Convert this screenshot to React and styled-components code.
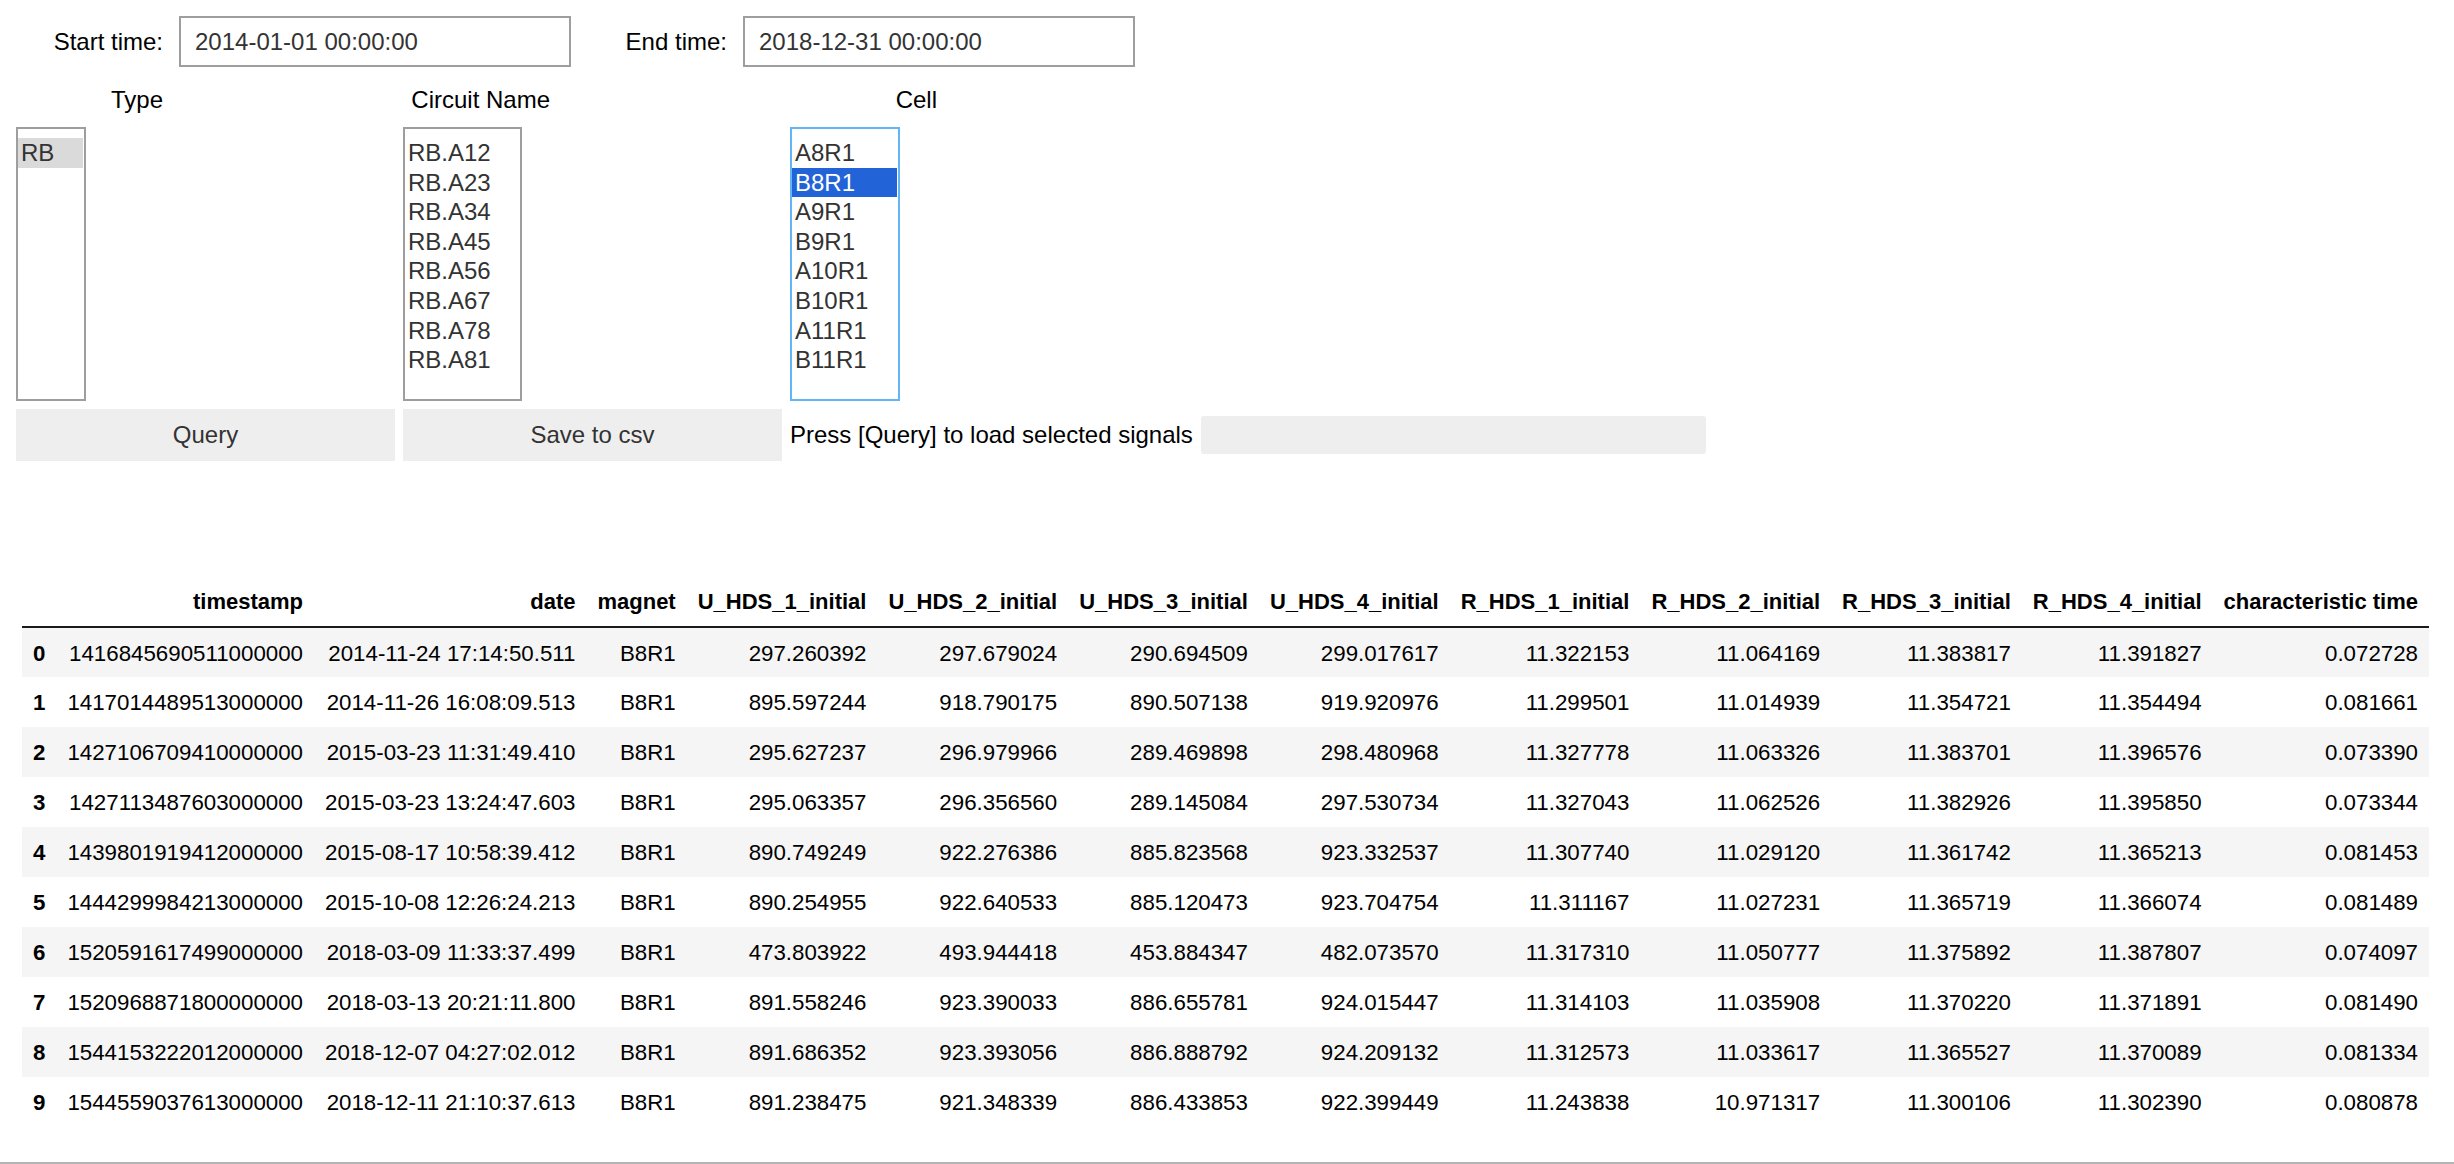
import React from 'react';
import styled, { createGlobalStyle } from 'styled-components';

const GlobalStyle = createGlobalStyle`
  html, body {
    margin: 0;
    padding: 0;
    background: #fff;
  }
  body {
    font-family: "Liberation Sans", Arial, Helvetica, sans-serif;
    color: #000;
  }
`;

const Page = styled.div`
  width: 2454px;
  height: 1164px;
  box-sizing: border-box;
  border-bottom: 2px solid #b4b4b4;
  padding-top: 16px;
  overflow: hidden;
`;

const Widgets = styled.div`
  padding-left: 16px;
  font-size: 24px;
`;

const TimeRow = styled.div`
  display: flex;
  gap: 9px;
`;

const TextWidget = styled.div`
  display: flex;
  align-items: center;
  gap: 16px;
`;

const Description = styled.div`
  width: 147px;
  text-align: right;
  white-space: nowrap;
  color: #000;
`;

const TextInput = styled.div`
  box-sizing: border-box;
  width: 392px;
  height: 51px;
  border: 2px solid #9e9e9e;
  padding-left: 14px;
  display: flex;
  align-items: center;
  color: #333;
`;

const Columns = styled.div`
  display: flex;
  gap: 8px;
  margin-top: 16px;
`;

const Column = styled.div`
  width: 379px;
  display: flex;
  flex-direction: column;
`;

const ColumnTitle = styled.div`
  width: 147px;
  height: 34px;
  line-height: 34px;
  text-align: right;
  white-space: nowrap;
  margin-bottom: 10px;
`;

const ListBox = styled.div`
  box-sizing: border-box;
  width: ${p => p.$width}px;
  height: 274px;
  border: 2px solid ${p => (p.$focused ? '#64b5f6' : '#9e9e9e')};
  padding: 9px 1px 0 0;
  color: #333;
`;

const Option = styled.div`
  height: 29.6px;
  line-height: 29.6px;
  padding-left: 3px;
  white-space: nowrap;
  background: ${p => (p.$selected ? (p.$active ? '#2264d8' : '#dadada') : 'transparent')};
  color: ${p => (p.$selected && p.$active ? '#fff' : '#333')};
`;

const ActionRow = styled.div`
  display: flex;
  align-items: center;
  gap: 8px;
  margin-top: 8px;
`;

const Button = styled.div`
  width: ${p => p.$width}px;
  height: 52px;
  background: #eeeeee;
  color: #333;
  display: flex;
  align-items: center;
  justify-content: center;
`;

const Status = styled.div`
  display: flex;
  align-items: center;
  white-space: nowrap;
`;

const StatusBar = styled.div`
  width: 505px;
  height: 38px;
  margin-left: 8px;
  border-radius: 3px;
  background: #eeeeee;
`;

const Table = styled.table`
  margin: 117px 0 0 22px;
  border-collapse: collapse;
  border-spacing: 0;
  font-size: 22.3px;
  color: #000;
`;

const HeadCell = styled.th`
  height: 48px;
  padding: 0 11px;
  font-size: 22px;
  text-align: right;
  vertical-align: middle;
  font-weight: bold;
  white-space: nowrap;
  border-bottom: 2px solid #1a1a1a;
`;

const Row = styled.tr`
  height: 50px;
  background: ${p => (p.$striped ? '#f5f5f5' : 'transparent')};
`;

const Cell = styled.td`
  padding: 2px 11px 0;
  text-align: right;
  vertical-align: middle;
  white-space: nowrap;
  font-weight: ${p => (p.$index ? 'bold' : 'normal')};
`;

const columns = [
  'timestamp', 'date', 'magnet', 'U_HDS_1_initial', 'U_HDS_2_initial', 'U_HDS_3_initial',
  'U_HDS_4_initial', 'R_HDS_1_initial', 'R_HDS_2_initial', 'R_HDS_3_initial', 'R_HDS_4_initial',
  'characteristic time',
];

const rows = [
  ['1416845690511000000', '2014-11-24 17:14:50.511', 'B8R1', '297.260392', '297.679024', '290.694509', '299.017617', '11.322153', '11.064169', '11.383817', '11.391827', '0.072728'],
  ['1417014489513000000', '2014-11-26 16:08:09.513', 'B8R1', '895.597244', '918.790175', '890.507138', '919.920976', '11.299501', '11.014939', '11.354721', '11.354494', '0.081661'],
  ['1427106709410000000', '2015-03-23 11:31:49.410', 'B8R1', '295.627237', '296.979966', '289.469898', '298.480968', '11.327778', '11.063326', '11.383701', '11.396576', '0.073390'],
  ['1427113487603000000', '2015-03-23 13:24:47.603', 'B8R1', '295.063357', '296.356560', '289.145084', '297.530734', '11.327043', '11.062526', '11.382926', '11.395850', '0.073344'],
  ['1439801919412000000', '2015-08-17 10:58:39.412', 'B8R1', '890.749249', '922.276386', '885.823568', '923.332537', '11.307740', '11.029120', '11.361742', '11.365213', '0.081453'],
  ['1444299984213000000', '2015-10-08 12:26:24.213', 'B8R1', '890.254955', '922.640533', '885.120473', '923.704754', '11.311167', '11.027231', '11.365719', '11.366074', '0.081489'],
  ['1520591617499000000', '2018-03-09 11:33:37.499', 'B8R1', '473.803922', '493.944418', '453.884347', '482.073570', '11.317310', '11.050777', '11.375892', '11.387807', '0.074097'],
  ['1520968871800000000', '2018-03-13 20:21:11.800', 'B8R1', '891.558246', '923.390033', '886.655781', '924.015447', '11.314103', '11.035908', '11.370220', '11.371891', '0.081490'],
  ['1544153222012000000', '2018-12-07 04:27:02.012', 'B8R1', '891.686352', '923.393056', '886.888792', '924.209132', '11.312573', '11.033617', '11.365527', '11.370089', '0.081334'],
  ['1544559037613000000', '2018-12-11 21:10:37.613', 'B8R1', '891.238475', '921.348339', '886.433853', '922.399449', '11.243838', '10.971317', '11.300106', '11.302390', '0.080878'],
];

const circuits = ['RB.A12', 'RB.A23', 'RB.A34', 'RB.A45', 'RB.A56', 'RB.A67', 'RB.A78', 'RB.A81'];
const cells = ['A8R1', 'B8R1', 'A9R1', 'B9R1', 'A10R1', 'B10R1', 'A11R1', 'B11R1'];

const SelectList = ({ title, items, selected, width, focused }) => (
  <Column>
    <ColumnTitle>{title}</ColumnTitle>
    <ListBox $width={width} $focused={focused}>
      {items.map(item => (
        <Option key={item} $selected={item === selected} $active={focused}>
          {item}
        </Option>
      ))}
    </ListBox>
  </Column>
);

export default function App() {
  return (
    <Page>
      <GlobalStyle />
      <Widgets>
        <TimeRow>
          <TextWidget>
            <Description>Start time:</Description>
            <TextInput>2014-01-01 00:00:00</TextInput>
          </TextWidget>
          <TextWidget>
            <Description>End time:</Description>
            <TextInput>2018-12-31 00:00:00</TextInput>
          </TextWidget>
        </TimeRow>

        <Columns>
          <SelectList title="Type" items={['RB']} selected="RB" width={70} />
          <SelectList title="Circuit Name" items={circuits} width={119} />
          <SelectList title="Cell" items={cells} selected="B8R1" width={110} focused />
        </Columns>

        <ActionRow>
          <Button $width={379}>Query</Button>
          <Button $width={379}>Save to csv</Button>
          <Status>
            Press [Query] to load selected signals
            <StatusBar />
          </Status>
        </ActionRow>
      </Widgets>

      <Table>
        <thead>
          <tr>
            <HeadCell />
            {columns.map(c => (
              <HeadCell key={c}>{c}</HeadCell>
            ))}
          </tr>
        </thead>
        <tbody>
          {rows.map((r, i) => (
            <Row key={i} $striped={i % 2 === 0}>
              <Cell $index>{i}</Cell>
              {r.map((v, j) => (
                <Cell key={j}>{v}</Cell>
              ))}
            </Row>
          ))}
        </tbody>
      </Table>
    </Page>
  );
}
